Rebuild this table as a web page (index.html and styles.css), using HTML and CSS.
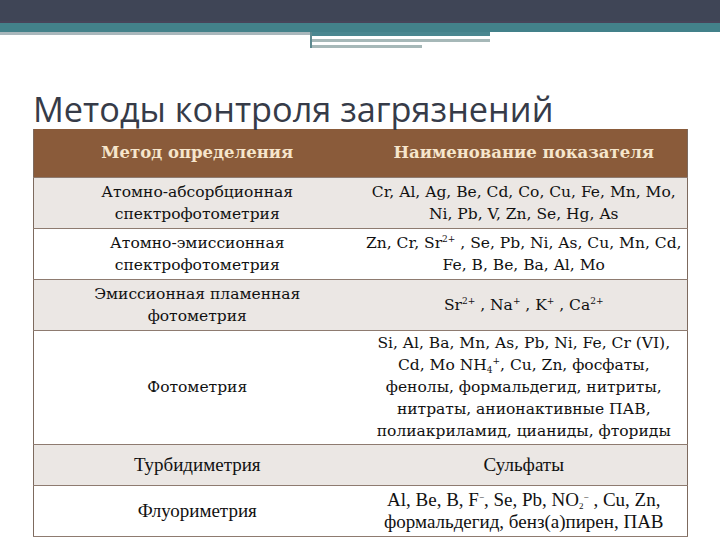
FILE: index.html
```html
<!DOCTYPE html>
<html lang="ru">
<head>
<meta charset="utf-8">
<link rel="stylesheet" href="styles.css">
</head>
<body>
<div class="slide">
  <div class="topbar"></div>
  <div class="teal"></div>
  <div class="deco">
    <div class="deco-left"></div>
    <div class="deco-right">
      <div class="deco-ext"></div>
      <div class="deco-line1"></div>
      <div class="deco-line2"></div>
    </div>
  </div>
  <h1 class="title">Методы контроля загрязнений</h1>
  <table class="tbl">
    <thead>
      <tr class="r-head"><th>Метод определения</th><th>Наименование показателя</th></tr>
    </thead>
    <tbody>
      <tr class="r2 alt"><td>Атомно-абсорбционная<br>спектрофотометрия</td><td>Cr, Al, Ag, Be, Cd, Co, Cu, Fe, Mn, Mo,<br>Ni, Pb, V, Zn, Se, Hg, As</td></tr>
      <tr class="r2"><td>Атомно-эмиссионная<br>спектрофотометрия</td><td>Zn, Cr, Sr<sup>2+</sup> , Se, Pb, Ni, As, Cu, Mn, Cd,<br>Fe, B, Be, Ba, Al, Mo</td></tr>
      <tr class="r2 alt"><td>Эмиссионная пламенная<br>фотометрия</td><td>Sr<sup>2+</sup> , Na<sup>+</sup> , K<sup>+</sup> , Ca<sup>2+</sup></td></tr>
      <tr class="r5"><td>Фотометрия</td><td class="lines">Si, Al, Ba, Mn, As, Pb, Ni, Fe, Cr (VI),<br>Cd, Mo NH<sub>4</sub><sup>+</sup>, Cu, Zn, фосфаты,<br>фенолы, формальдегид, нитриты,<br>нитраты, анионактивные ПАВ,<br>полиакриламид, цианиды, фториды</td></tr>
      <tr class="r1 alt narrow"><td>Турбидиметрия</td><td>Сульфаты</td></tr>
      <tr class="r2 narrow"><td>Флуориметрия</td><td>Al, Be, B, F<sup>−</sup>, Se, Pb, NO<sub>2</sub><sup>−</sup> , Cu, Zn,<br>формальдегид, бенз(а)пирен, ПАВ</td></tr>
    </tbody>
  </table>
</div>
</body>
</html>
```

FILE: styles.css
```css
html, body {
  margin: 0;
  padding: 0;
  background: #ffffff;
}
.slide {
  width: 720px;
  height: 540px;
  overflow: hidden;
  position: relative;
}
.topbar {
  height: 21px;
  background: #3f4556;
  border-bottom: 2px solid #474459;
}
.teal {
  height: 9px;
  background: #43818a;
}
.deco {
  display: flex;
  height: 16px;
}
.deco-left {
  width: 310px;
  height: 3px;
  background: #a9b7bc;
}
.deco-right {
  width: 178px;
  border-left: 2px solid #5e8a90;
}
.deco-ext {
  height: 4px;
  background: #4a8790;
}
.deco-line1 {
  margin-top: 3px;
  height: 3px;
  background: #a6b8b8;
}
.deco-line2 {
  margin-top: 3px;
  width: 110px;
  height: 3px;
  background: #a6b8b8;
}
.title {
  margin: 0 0 0 33px;
  height: 81px;
  box-sizing: border-box;
  padding-top: 44px;
  font-family: "Open Sans", sans-serif;
  font-weight: normal;
  font-size: 34.3px;
  line-height: 34px;
  color: #363b48;
  white-space: nowrap;
}
.tbl {
  margin: 0 0 0 33px;
  width: 655px;
  border-collapse: collapse;
  table-layout: fixed;
  font-family: "DejaVu Serif", serif;
  font-size: 15.5px;
  color: #111111;
  border-left: 1px solid #7d6a5e;
  border-right: 1px solid #7d6a5e;
}
.tbl th, .tbl td {
  width: 50%;
  text-align: center;
  vertical-align: middle;
  padding: 0 2px;
  line-height: 22px;
}
.tbl th {
  background: #8a5b3a;
  color: #f6e6cc;
  font-weight: bold;
  font-size: 16.5px;
}
.r-head { height: 48px; }
.tbl tbody tr {
  border-top: 1px solid #8e7b70;
}
.tbl tbody tr:last-child {
  border-bottom: 1px solid #8e7b70;
}
.r2 { height: 51px; }
.r1 { height: 41px; }
.r5 { height: 114px; }
.alt { background: #ebe7e4; }
.tbl sup {
  font-size: 9px;
  line-height: 0;
  vertical-align: 6px;
}
.tbl sub {
  font-size: 9px;
  line-height: 0;
  vertical-align: -3px;
}
.narrow td {
  font-family: "Liberation Serif", serif;
  font-size: 19px;
}
```
